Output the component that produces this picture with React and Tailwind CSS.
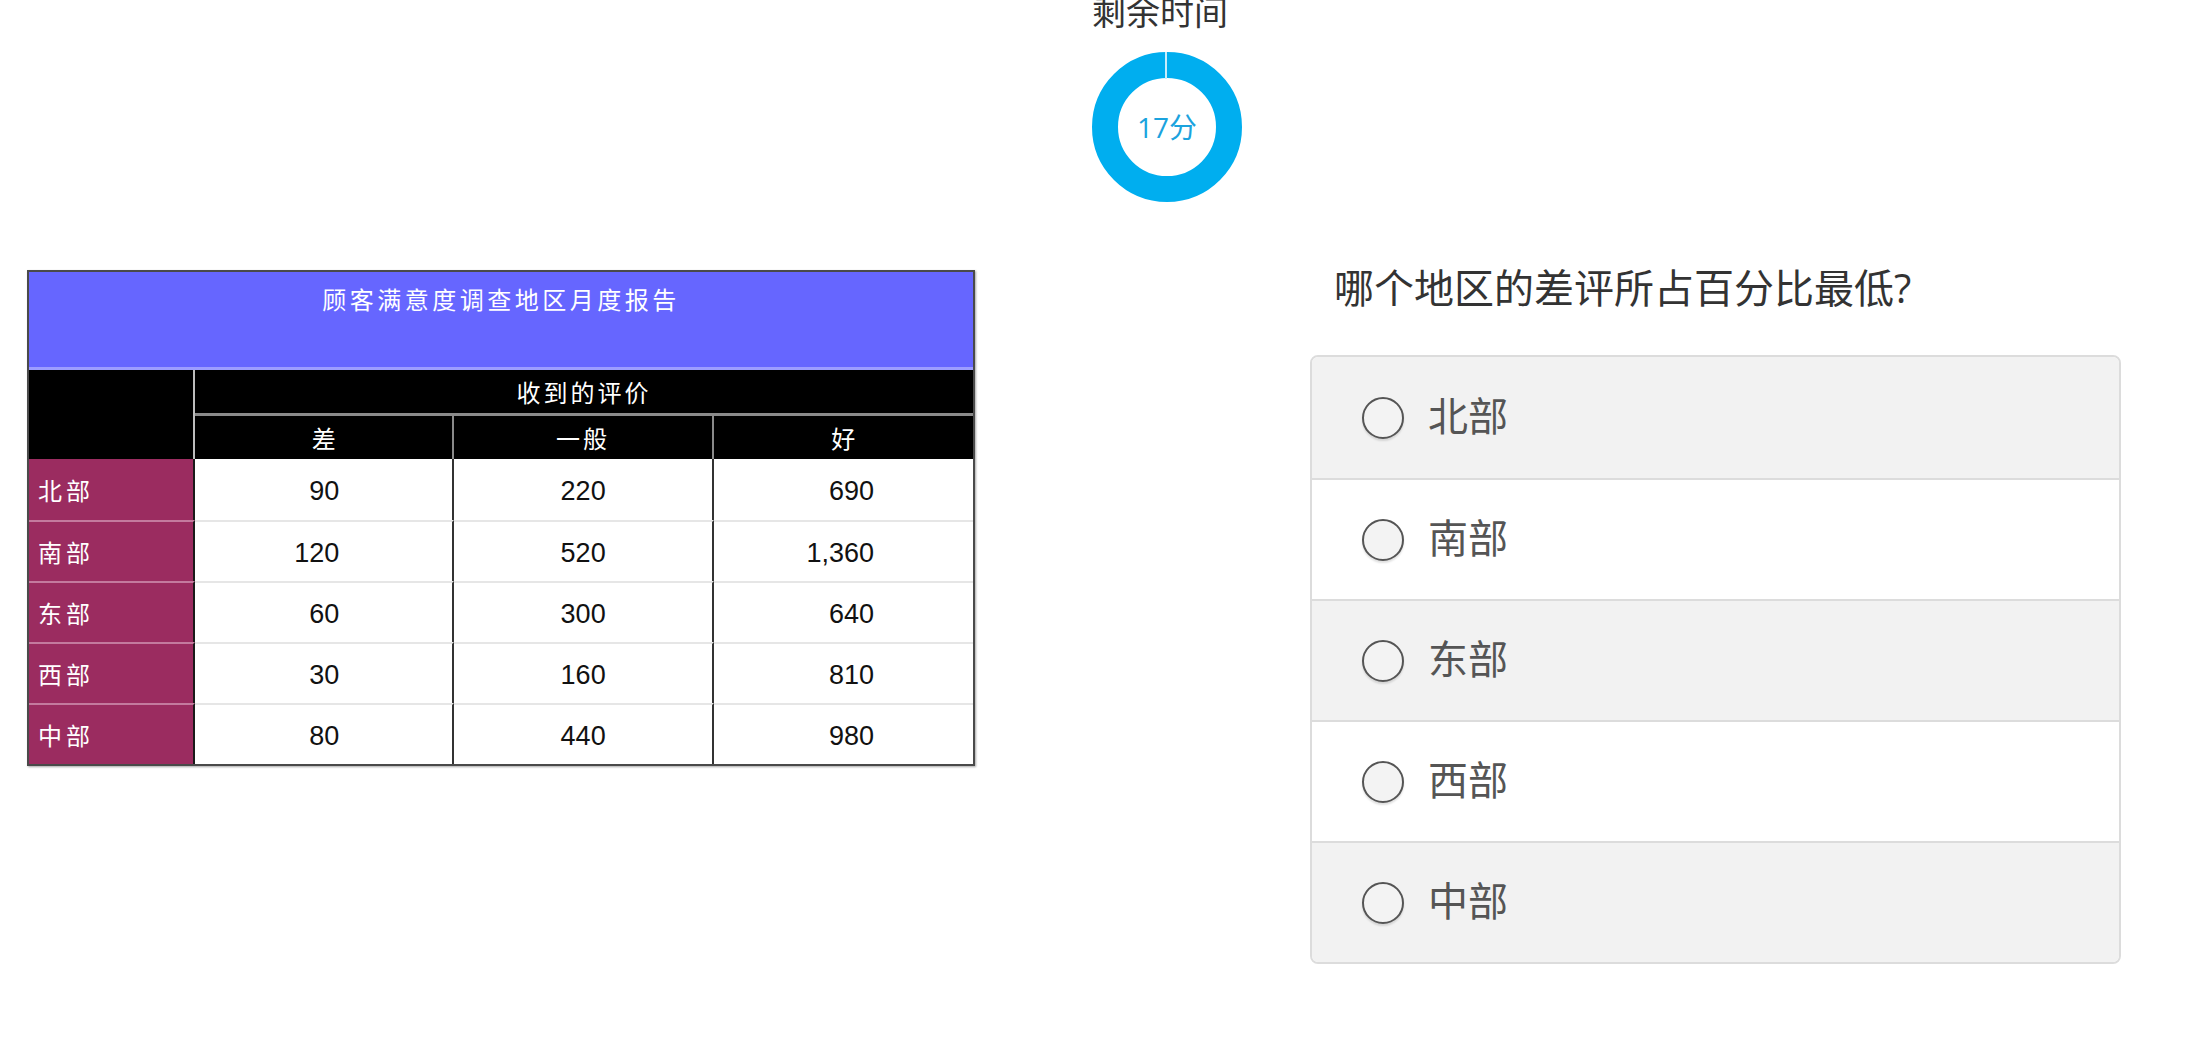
const rows = [
  { name: '北部', bad: '90', mid: '220', good: '690' },
  { name: '南部', bad: '120', mid: '520', good: '1,360' },
  { name: '东部', bad: '60', mid: '300', good: '640' },
  { name: '西部', bad: '30', mid: '160', good: '810' },
  { name: '中部', bad: '80', mid: '440', good: '980' },
]

const options = ['北部', '南部', '东部', '西部', '中部']

function Timer() {
  return (
    <div className="flex flex-col items-start pl-[1092px]">
      <div className="-mt-[5px] text-[34px] leading-none text-[#333]">剩余时间</div>
      <div className="relative mt-[23px] h-[150px] w-[150px]">
        <svg width="150" height="150" viewBox="0 0 150 150">
          <circle cx="75" cy="75" r="62" fill="none" stroke="#00aeef" strokeWidth="26" />
          <line x1="74" y1="0" x2="74" y2="27" stroke="#c8ecfb" strokeWidth="2" />
        </svg>
        <div className="absolute inset-0 flex items-center justify-center text-[28px] text-[#1ba3de]">
          17分
        </div>
      </div>
    </div>
  )
}

function ReportTable() {
  return (
    <div className="-mt-[2px] w-[948px] border-2 border-[#4a4a4a] shadow-[1px_1px_2px_rgba(0,0,0,0.35)] font-['Noto_Sans_CJK_SC',sans-serif]">
      <div className="h-[98px] border-b-[3px] border-[#9d9dff] bg-[#6666ff] pt-[15px] text-center text-[24px] leading-none tracking-[3.5px] text-white">
        顾客满意度调查地区月度报告
      </div>

      <div className="grid grid-cols-[166px_1fr_1fr_1fr] bg-black text-[24px] leading-none text-white">
        <div className="row-span-2 border-r-2 border-[#bdbdbd]"></div>
        <div className="col-span-3 flex h-[46px] items-center justify-center border-b-[3px] border-[#8a8a8a] tracking-[3px]">
          收到的评价
        </div>
        <div className="flex h-[43px] items-center justify-center border-r-2 border-[#8a8a8a]">差</div>
        <div className="flex h-[43px] items-center justify-center border-r-2 border-[#8a8a8a] tracking-[3px]">一般</div>
        <div className="flex h-[43px] items-center justify-center">好</div>
      </div>

      {rows.map((row, i) => (
        <div key={row.name} className="grid h-[61px] grid-cols-[166px_1fr_1fr_1fr]">
          <div
            className={
              'flex items-center border-r-2 border-[#1a1a1a] bg-[#9b2c60] pl-[9px] text-[24px] tracking-[4px] text-white ' +
              (i > 0 ? 'border-t-2 border-t-[#c47a9e]' : '')
            }
          >
            {row.name}
          </div>
          <div
            className={
              'flex items-center justify-end border-r-2 border-[#333] pr-[113px] pt-[3px] font-["Liberation_Sans",sans-serif] text-[27px] text-[#111] ' +
              (i > 0 ? 'border-t-2 border-t-[#e6e6e6]' : '')
            }
          >
            {row.bad}
          </div>
          <div
            className={
              'flex items-center justify-end border-r-2 border-[#333] pr-[106px] pt-[3px] font-["Liberation_Sans",sans-serif] text-[27px] text-[#111] ' +
              (i > 0 ? 'border-t-2 border-t-[#e6e6e6]' : '')
            }
          >
            {row.mid}
          </div>
          <div
            className={
              'flex items-center justify-end pr-[99px] pt-[3px] font-["Liberation_Sans",sans-serif] text-[27px] text-[#111] ' +
              (i > 0 ? 'border-t-2 border-t-[#e6e6e6]' : '')
            }
          >
            {row.good}
          </div>
        </div>
      ))}
    </div>
  )
}

function Question() {
  return (
    <div className="w-[811px]">
      <h2 className="-mt-[4px] pl-[24px] text-[40px] font-normal leading-none text-[#333]">
        哪个地区的差评所占百分比最低?
      </h2>

      <div className="mt-[47px] overflow-hidden rounded-[8px] border-2 border-[#dcdcdc]">
        {options.map((option, i) => (
          <label
            key={option}
            className={
              'flex h-[121px] cursor-pointer items-center gap-[24px] pl-[50px] ' +
              (i % 2 === 0 ? 'bg-[#f2f2f2] ' : 'bg-white ') +
              (i > 0 ? 'border-t-2 border-[#dcdcdc]' : '')
            }
          >
            <span className="h-[42px] w-[42px] rounded-full border-2 border-[#555] bg-[#f3f3f3] shadow-[0_2px_2px_rgba(0,0,0,0.12)]"></span>
            <span className="-mt-[3px] text-[40px] leading-none text-[#555]">{option}</span>
          </label>
        ))}
      </div>
    </div>
  )
}

export default function App() {
  return (
    <div className="min-h-screen overflow-hidden bg-white font-['Open_Sans','Noto_Sans_CJK_SC',sans-serif]">
      <Timer />

      <div className="mt-[70px] flex items-start pl-[27px]">
        <ReportTable />
        <div className="ml-[335px]">
          <Question />
        </div>
      </div>
    </div>
  )
}
